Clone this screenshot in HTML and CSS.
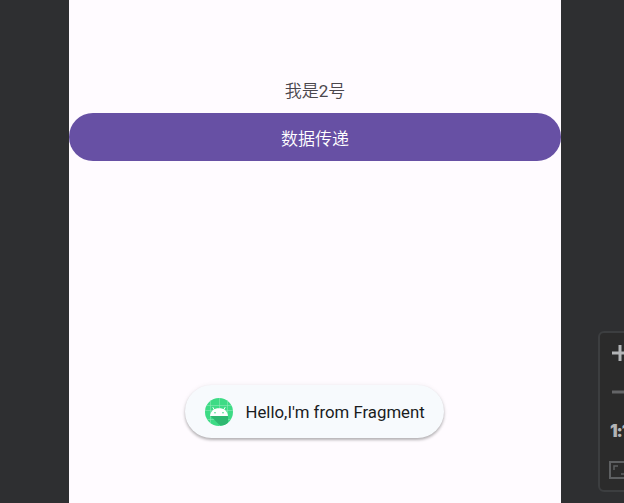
FILE: index.html
```html
<!DOCTYPE html>
<html lang="zh">
<head>
<meta charset="utf-8">
<title>Fragment</title>
<link rel="stylesheet" href="styles.css">
</head>
<body>
<main class="screen">
  <p class="label">我是<span class="digit">2</span>号</p>
  <button class="action">数据传递</button>
  <div class="toast">
    <svg class="app-icon" viewBox="0 0 28 28">
      <defs><clipPath id="disc"><circle cx="14" cy="14" r="14"/></clipPath></defs>
      <g clip-path="url(#disc)">
        <rect width="28" height="28" fill="#3ddb85"/>
        <path d="M5.5 0V28M14.5 0V28M22.5 0V28M0 7.5H28M0 12.5H28M0 21.5H28" stroke="#8be9b5" stroke-width=".6" fill="none"/>
        <path d="M5 17.5L15 27.5H20L23 25V17.5Z" fill="#2fb871"/>
      </g>
      <path d="M9.3 11.8L7.8 9.2M18.7 11.8L20.2 9.2" stroke="#fff" stroke-width="1" fill="none"/>
      <path d="M5 18C5.5 12.8 9 10.2 14 10.2S22.5 12.8 23 18Z" fill="#fff"/>
      <circle cx="10" cy="14.8" r=".8" fill="#3ddb85"/><circle cx="18" cy="14.8" r=".8" fill="#3ddb85"/>
    </svg>
    <span class="message">Hello,I'm from Fragment</span>
  </div>
</main>
<aside class="zoom-panel">
  <svg class="tool" viewBox="0 0 18 18"><path d="M1 9H17M9 1V17" stroke="#b2b4b6" stroke-width="3"/></svg>
  <svg class="tool" viewBox="0 0 18 18"><path d="M1 9H17" stroke="#646567" stroke-width="3"/></svg>
  <span class="ratio">1:1</span>
  <svg class="tool fit" viewBox="0 0 24 18"><rect x="1" y="1" width="22" height="16" fill="none" stroke="#5e6062" stroke-width="2"/><path d="M5 9V5H9M12 13H19V9" fill="none" stroke="#5e6062" stroke-width="1.5"/></svg>
</aside>
</body>
</html>
```
FILE: styles.css
```css
* {
  box-sizing: border-box;
}

body {
  position: relative;
  height: 503px;
  margin: 0;
  padding-left: 69px;
  overflow: hidden;
  background: #2e2f31;
  font-family: Roboto, "Noto Sans CJK SC", sans-serif;
}

.screen {
  display: flex;
  flex-direction: column;
  align-items: center;
  width: 492px;
  height: 503px;
  padding: 79px 0 65px;
  background: #fffbff;
}

.label {
  margin: 0 0 10px;
  color: #4b474d;
  font-size: 17px;
  font-weight: 350;
  line-height: 24px;
}

.digit {
  font-weight: 400;
}

.action {
  width: 100%;
  height: 48px;
  padding: 3px 0 0;
  border: 0;
  border-radius: 24px;
  background: #6750a4;
  color: #fff;
  font: 350 17px/24px Roboto, "Noto Sans CJK SC", sans-serif;
}

.toast {
  display: flex;
  align-items: center;
  gap: 12.5px;
  width: 259px;
  height: 53px;
  margin: auto 1px 0 0;
  padding-left: 20px;
  border-radius: 27px;
  background: #f7fafd;
  box-shadow: 0 2px 3px rgb(0 0 0 / 28%), 0 0 5px rgb(0 0 0 / 6%);
  color: #1a1c1e;
  font-size: 16.8px;
  white-space: nowrap;
}

.message {
  padding-top: 0;
}

.app-icon {
  width: 28px;
  height: 28px;
}

/* Floating zoom controls, cut off by the window edge. */
.zoom-panel {
  position: absolute;
  top: 331px;
  left: 598px;
  display: flex;
  flex-direction: column;
  align-items: flex-start;
  width: 44px;
  height: 161px;
  padding: 11px 0 0 10px;
  border: 2px solid #3c3e40;
  border-radius: 6px;
  background: #2b2b2b;
}

.tool {
  width: 18px;
  height: 18px;
  margin: 0 0 21px 1px;
  flex: none;
}

.ratio {
  height: 18px;
  margin-bottom: 21px;
  color: #b2b4b6;
  font: 900 17px/18px Inter, sans-serif;
  letter-spacing: -1.2px;
}

.fit {
  width: 24px;
  margin: 0 0 0 -1px;
}
```
